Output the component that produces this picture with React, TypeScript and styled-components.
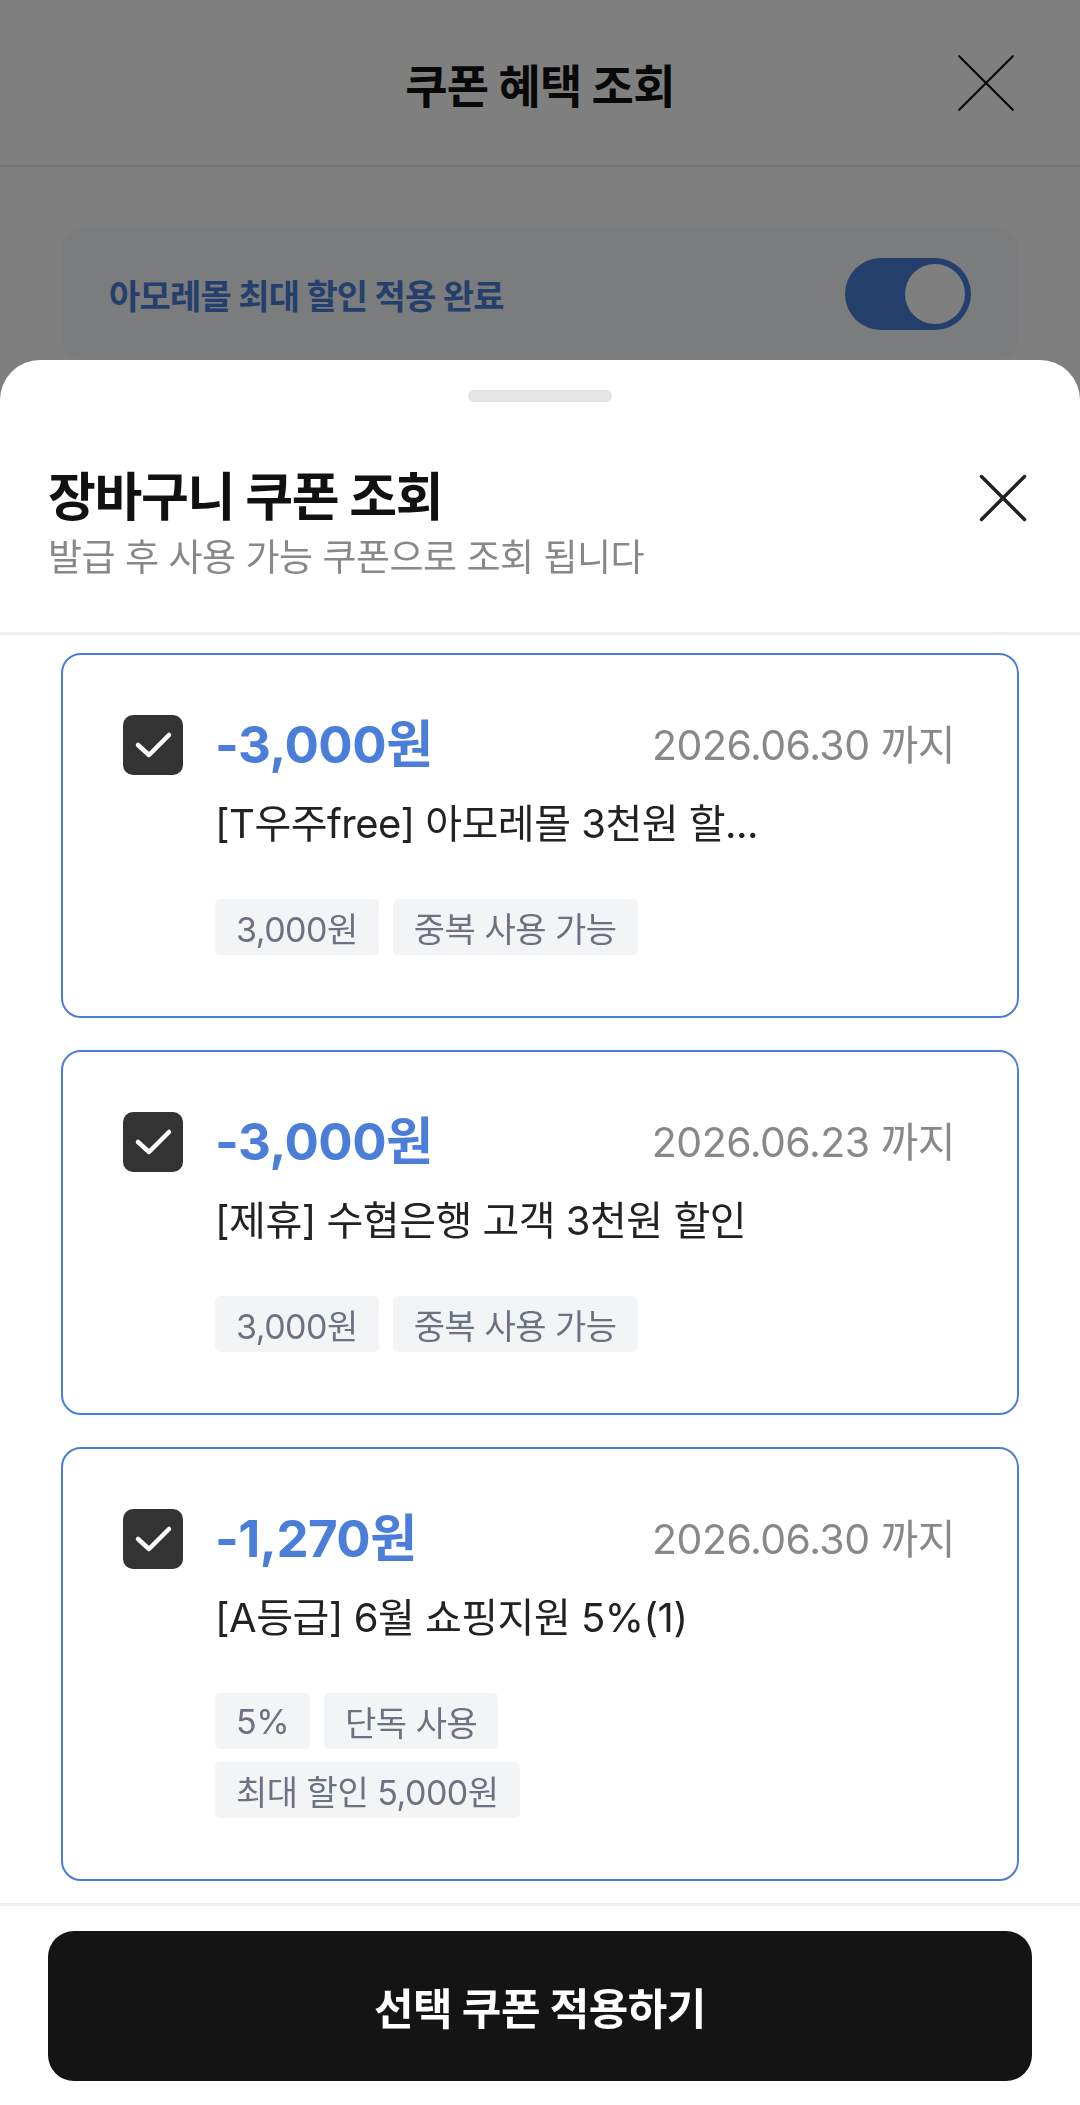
import React from 'react';
import styled, { createGlobalStyle } from 'styled-components';

const GlobalStyle = createGlobalStyle`
  html, body {
    margin: 0;
    padding: 0;
    background: #ffffff;
  }
  body {
    font-family: "Inter", "Noto Sans CJK KR", sans-serif;
    color: #111111;
    -webkit-font-smoothing: antialiased;
  }
  * {
    box-sizing: border-box;
  }
`;

const Page = styled.div`
  min-height: 2105px;
  background: #ffffff;
`;

const TopBar = styled.header`
  height: 167px;
  display: grid;
  grid-template-columns: 1fr auto 1fr;
  align-items: center;
  padding: 0 64px;
  border-bottom: 2px solid #ececec;
`;

const TopTitle = styled.h1`
  grid-column: 2;
  margin: 0;
  font-size: 46px;
  font-weight: 700;
  letter-spacing: -0.8px;
  color: #111111;
`;

const IconButton = styled.button<{ $size: number }>`
  justify-self: end;
  width: ${p => p.$size}px;
  height: ${p => p.$size}px;
  padding: 0;
  border: none;
  background: transparent;
  display: flex;
  align-items: center;
  justify-content: center;
  cursor: pointer;
`;

const Banner = styled.div`
  margin: 61px 61px 0;
  height: 132px;
  padding: 0 48px;
  border-radius: 22px;
  background: #f6f8fc;
  display: flex;
  align-items: center;
  justify-content: space-between;
`;

const BannerText = styled.span`
  font-size: 34px;
  font-weight: 700;
  color: #4a7ed9;
  letter-spacing: -0.8px;
`;

const Toggle = styled.div<{ $on: boolean }>`
  position: relative;
  width: 126px;
  height: 72px;
  border-radius: 36px;
  background: ${p => (p.$on ? '#4a7ed9' : '#d5d8de')};
`;

const Knob = styled.span<{ $on: boolean }>`
  position: absolute;
  top: 6px;
  ${p => (p.$on ? 'right: 6px;' : 'left: 6px;')}
  width: 60px;
  height: 60px;
  border-radius: 50%;
  background: #ffffff;
`;

const Dim = styled.div`
  position: fixed;
  inset: 0;
  background: rgba(0, 0, 0, 0.5);
  z-index: 10;
`;

const Sheet = styled.section`
  position: fixed;
  left: 0;
  right: 0;
  bottom: 0;
  z-index: 20;
  background: #ffffff;
  border-radius: 40px 40px 0 0;
  display: flex;
  flex-direction: column;
  overflow: hidden;
`;

const Handle = styled.div`
  align-self: center;
  margin-top: 30px;
  width: 144px;
  height: 12px;
  border-radius: 6px;
  background: #e4e4e4;
`;

const SheetHeader = styled.div`
  display: flex;
  align-items: flex-start;
  justify-content: space-between;
  padding: 68px 52px 52px 48px;
  border-bottom: 3px solid #f0f0f0;
`;

const SheetTitle = styled.h2`
  margin: 0;
  font-size: 52px;
  line-height: 56px;
  font-weight: 700;
  letter-spacing: -1.3px;
  color: #111111;
`;

const SheetSub = styled.p`
  margin: 10px 0 0;
  font-size: 37px;
  line-height: 44px;
  font-weight: 400;
  letter-spacing: -0.5px;
  color: #888888;
`;

const CloseWrap = styled.div`
  margin-top: 3px;
`;

const CouponList = styled.div`
  display: flex;
  flex-direction: column;
  gap: 32px;
  padding: 18px 61px 22px;
`;

const Card = styled.div<{ $selected: boolean }>`
  display: grid;
  grid-template-columns: 60px 1fr;
  column-gap: 32px;
  padding: 60px 62px 61px 60px;
  border: 2px solid ${p => (p.$selected ? '#4a7ed9' : '#e3e5e8')};
  border-radius: 20px;
  background: #ffffff;
`;

const Check = styled.div<{ $checked: boolean }>`
  width: 60px;
  height: 60px;
  border-radius: 10px;
  background: ${p => (p.$checked ? '#333333' : '#ffffff')};
  border: ${p => (p.$checked ? 'none' : '2px solid #cccccc')};
  display: flex;
  align-items: center;
  justify-content: center;
`;

const CardBody = styled.div`
  min-width: 0;
`;

const CardTop = styled.div`
  height: 60px;
  display: flex;
  align-items: center;
  justify-content: space-between;
`;

const Amount = styled.span`
  font-size: 51px;
  line-height: 60px;
  font-weight: 700;
  color: #4a7ed9;
  letter-spacing: -0.5px;
`;

const Expiry = styled.span`
  font-size: 41px;
  line-height: 60px;
  font-weight: 400;
  color: #888888;
  letter-spacing: -0.5px;
`;

const CouponName = styled.div`
  margin-top: 23px;
  font-size: 40px;
  line-height: 52px;
  color: #222222;
  letter-spacing: -0.5px;
  white-space: nowrap;
`;

const Tags = styled.div`
  margin-top: 49px;
  display: flex;
  flex-wrap: wrap;
  gap: 13px 14px;
  max-width: 540px;
`;

const Tag = styled.span`
  height: 56px;
  padding: 0 21px;
  display: inline-flex;
  align-items: center;
  border-radius: 5px;
  background: #f3f4f6;
  color: #6b7280;
  font-size: 34px;
  letter-spacing: -0.5px;
  white-space: nowrap;
`;

const Footer = styled.div`
  border-top: 3px solid #f0f0f0;
  padding: 25px 48px 24px;
`;

const ApplyButton = styled.button`
  width: 100%;
  height: 150px;
  border: none;
  border-radius: 26px;
  background: #141414;
  color: #ffffff;
  font-family: inherit;
  font-size: 43px;
  font-weight: 700;
  letter-spacing: -0.5px;
  cursor: pointer;
`;

const CloseIcon: React.FC<{ size: number; stroke: number; color: string }> = ({ size, stroke, color }) => (
  <svg width={size} height={size} viewBox={`0 0 ${size} ${size}`} fill="none">
    <line x1={stroke} y1={stroke} x2={size - stroke} y2={size - stroke} stroke={color} strokeWidth={stroke} strokeLinecap="round" />
    <line x1={size - stroke} y1={stroke} x2={stroke} y2={size - stroke} stroke={color} strokeWidth={stroke} strokeLinecap="round" />
  </svg>
);

const CheckMark = () => (
  <svg width="60" height="60" viewBox="0 0 60 60" fill="none">
    <polyline points="15,30 26,40 46,20" stroke="#ffffff" strokeWidth="4.5" strokeLinecap="round" strokeLinejoin="round" />
  </svg>
);

interface Coupon {
  id: number;
  amount: string;
  expiry: string;
  name: string;
  tags: string[];
  selected: boolean;
}

const coupons: Coupon[] = [
  { id: 1, amount: '-3,000원', expiry: '2026.06.30 까지', name: '[T우주free] 아모레몰 3천원 할...', tags: ['3,000원', '중복 사용 가능'], selected: true },
  { id: 2, amount: '-3,000원', expiry: '2026.06.23 까지', name: '[제휴] 수협은행 고객 3천원 할인', tags: ['3,000원', '중복 사용 가능'], selected: true },
  { id: 3, amount: '-1,270원', expiry: '2026.06.30 까지', name: '[A등급] 6월 쇼핑지원 5%(1)', tags: ['5%', '단독 사용', '최대 할인 5,000원'], selected: true },
];

export default function App() {
  return (
    <>
      <GlobalStyle />
      <Page>
        <TopBar>
          <TopTitle>쿠폰 혜택 조회</TopTitle>
          <IconButton $size={60} aria-label="닫기">
            <CloseIcon size={58} stroke={2.2} color="#111111" />
          </IconButton>
        </TopBar>
        <Banner>
          <BannerText>아모레몰 최대 할인 적용 완료</BannerText>
          <Toggle $on>
            <Knob $on />
          </Toggle>
        </Banner>
      </Page>

      <Dim />

      <Sheet>
        <Handle />
        <SheetHeader>
          <div>
            <SheetTitle>장바구니 쿠폰 조회</SheetTitle>
            <SheetSub>발급 후 사용 가능 쿠폰으로 조회 됩니다</SheetSub>
          </div>
          <CloseWrap>
            <CloseIcon size={50} stroke={3.5} color="#222222" />
          </CloseWrap>
        </SheetHeader>

        <CouponList>
          {coupons.map(c => (
            <Card key={c.id} $selected={c.selected}>
              <Check $checked={c.selected}>{c.selected && <CheckMark />}</Check>
              <CardBody>
                <CardTop>
                  <Amount>{c.amount}</Amount>
                  <Expiry>{c.expiry}</Expiry>
                </CardTop>
                <CouponName>{c.name}</CouponName>
                <Tags>
                  {c.tags.map(t => (
                    <Tag key={t}>{t}</Tag>
                  ))}
                </Tags>
              </CardBody>
            </Card>
          ))}
        </CouponList>

        <Footer>
          <ApplyButton>선택 쿠폰 적용하기</ApplyButton>
        </Footer>
      </Sheet>
    </>
  );
}
